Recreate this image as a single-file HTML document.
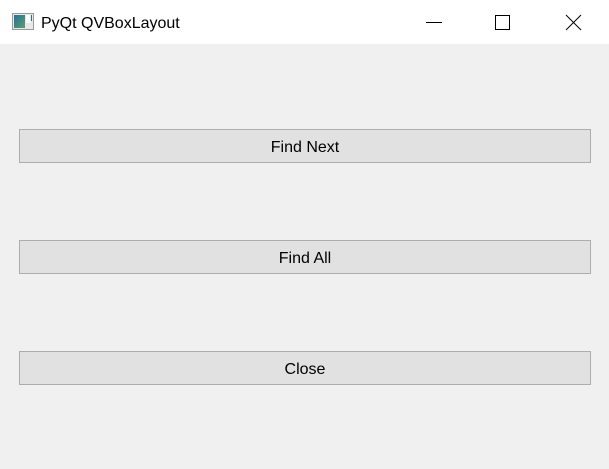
<!DOCTYPE html>
<html><head><meta charset="utf-8"><style>
html,body{margin:0;padding:0;width:609px;height:469px;overflow:hidden;background:#f0f0f0;font-family:"Liberation Sans",sans-serif;}
.tb{position:absolute;left:0;top:0;width:609px;height:44px;background:#fff;}
.title{position:absolute;left:41px;top:15px;font-size:16px;color:#000;}
.btn{position:absolute;left:19px;width:570px;height:32px;background:#e1e1e1;border:1px solid #adadad;font-size:16px;color:#000;text-align:center;line-height:36px;}
</style></head><body>
<div class="tb">
<svg style="position:absolute;left:12px;top:13px" width="22" height="18" viewBox="0 0 22 18">
<rect x="0.5" y="0.5" width="21" height="16" fill="#e8e8e8" stroke="#999"/>
<defs><linearGradient id="g" x1="0" y1="0" x2="1" y2="1"><stop offset="0" stop-color="#2a6f9a"/><stop offset="1" stop-color="#5aa070"/></linearGradient></defs>
<rect x="2" y="2" width="11" height="13" fill="url(#g)"/>
<rect x="14" y="2" width="4" height="8" fill="#fff"/>
<rect x="19" y="2" width="1" height="6" fill="#2a6f9a"/>
</svg>
<div class="title">PyQt QVBoxLayout</div>
<svg style="position:absolute;left:420px;top:14px" width="170" height="18">
<line x1="6" y1="8.5" x2="22" y2="8.5" stroke="#000" stroke-width="1"/>
<rect x="75.5" y="1.5" width="14" height="14" fill="none" stroke="#000"/>
<line x1="146" y1="1" x2="161" y2="16" stroke="#000"/>
<line x1="161" y1="1" x2="146" y2="16" stroke="#000"/>
</svg>
</div>
<div class="btn" style="top:129px">Find Next</div>
<div class="btn" style="top:240px">Find All</div>
<div class="btn" style="top:351px">Close</div>
</body></html>
